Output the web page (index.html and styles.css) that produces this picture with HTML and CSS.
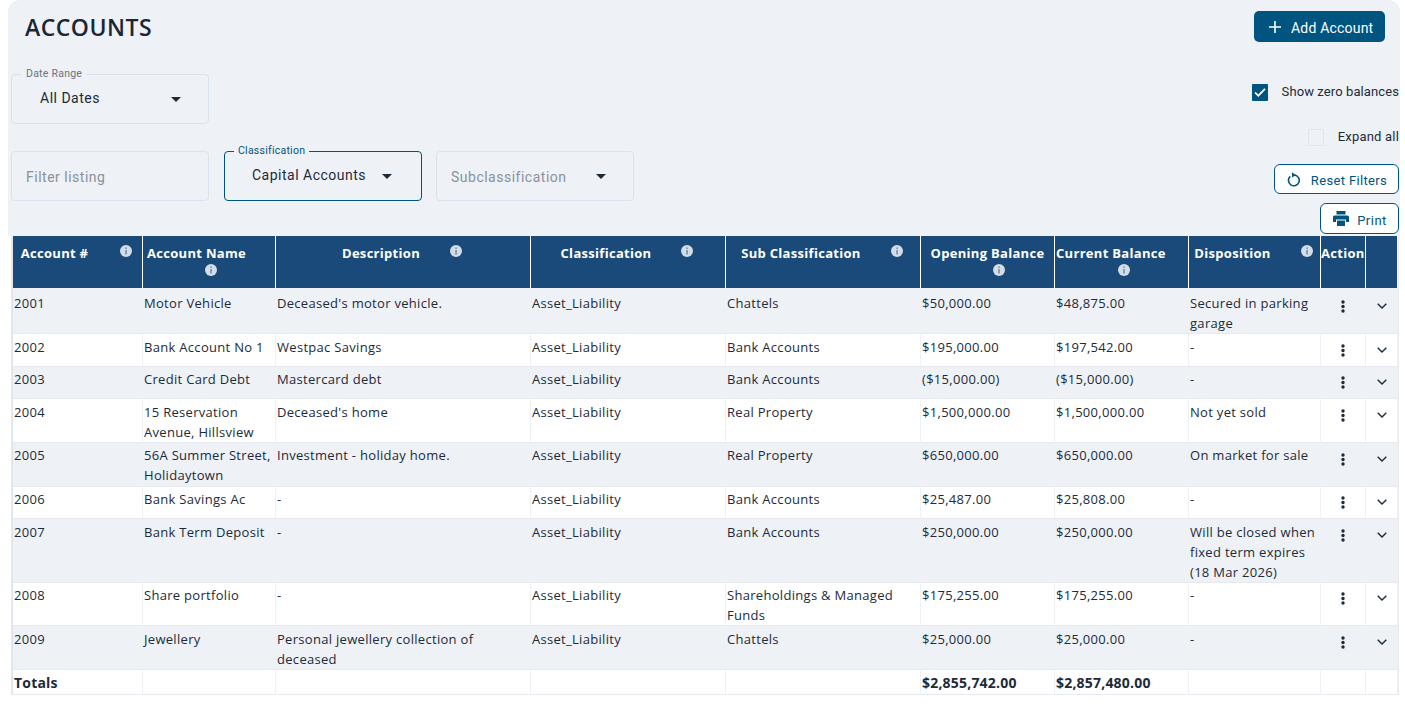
FILE: index.html
```html
<!DOCTYPE html>
<html lang="en">
<head>
<meta charset="utf-8">
<title>Accounts</title>
<link rel="stylesheet" href="styles.css">
</head>
<body>
<svg class="defs" width="0" height="0" aria-hidden="true">
  <symbol id="info" viewBox="0 0 12 12"><circle cx="6" cy="6" r="6" fill="#d3dde7"/><rect x="5.3" y="2.400" width="1.500" height="1.500" fill="#6f8aa5"/><rect x="5.3" y="5" width="1.500" height="4.500" fill="#6f8aa5"/></symbol>
  <symbol id="dots" viewBox="0 0 4 13"><circle cx="2" cy="2" r="1.700"/><circle cx="2" cy="6.500" r="1.700"/><circle cx="2" cy="11" r="1.700"/></symbol>
  <symbol id="chev" viewBox="0 0 10 6"><path d="M.7.7 5 5 9.3.7" fill="none" stroke="currentColor" stroke-width="1.400"/></symbol>
  <symbol id="caret" viewBox="0 0 10 5"><path d="M0 0h10L5 5z"/></symbol>
</svg>
<main class="panel">
  <header class="head">
    <h1 class="title">ACCOUNTS</h1>
    <button class="btn-primary"><svg class="ic-plus" viewBox="0 0 12 12"><path d="M6 0v12M0 6h12" stroke="#fff" stroke-width="1.600"/></svg>Add Account</button>
  </header>
  <section class="filters">
    <div class="filters-left">
      <div class="filter-row">
        <div class="field"><span class="field-label">Date Range</span><span class="field-value">All Dates</span><svg class="caret caret-date"><use href="#caret"/></svg></div>
      </div>
      <div class="filter-row">
        <div class="field"><span class="placeholder">Filter listing</span></div>
        <div class="field field-active"><span class="field-label label-active">Classification</span><span class="field-value">Capital Accounts</span><svg class="caret caret-class"><use href="#caret"/></svg></div>
        <div class="field"><span class="placeholder">Subclassification</span><svg class="caret caret-sub"><use href="#caret"/></svg></div>
      </div>
    </div>
    <div class="filters-right">
      <label class="check check-zero"><span class="box box-on"><svg viewBox="0 0 16 16"><path d="M3 8.500l3.300 3.200L13 4.800" fill="none" stroke="#fff" stroke-width="1.700"/></svg></span>Show zero balances</label>
      <label class="check check-expand"><span class="box"></span>Expand all</label>
      <button class="btn-outline btn-reset"><svg class="ic-reset" viewBox="0 0 14 15"><path d="M7.500 3A5.400 5.400 0 1 1 3.300 4.300" fill="none" stroke="#005580" stroke-width="1.600"/><path d="M5 .6 9 3 5 5.400z" fill="#005580"/></svg>Reset Filters</button>
      <button class="btn-outline btn-print"><svg class="ic-print" viewBox="0 0 16 15"><path d="M3.500 0h9v3.500h-9zM1.500 4.500h13a1.500 1.500 0 0 1 1.500 1.500v5h-3V8.500H3V11H0V6a1.500 1.500 0 0 1 1.500-1.500zM4 9.500h8V15H4z" fill="#005580"/></svg>Print</button>
    </div>
  </section>
  <div class="table-wrap">
    <div class="table-box">
    <table class="accounts">
      <colgroup>
        <col class="c1"><col class="c2"><col class="c3"><col class="c4"><col class="c5"><col class="c6"><col class="c7"><col class="c8"><col class="c9"><col class="c10">
      </colgroup>
      <thead>
        <tr>
          <th><span class="th-in">Account #<svg class="info"><use href="#info"/></svg></span></th>
          <th class="th-name"><span class="th-label">Account Name</span><svg class="info info-block"><use href="#info"/></svg></th>
          <th><span class="th-in">Description<svg class="info"><use href="#info"/></svg></span></th>
          <th><span class="th-in">Classification<svg class="info"><use href="#info"/></svg></span></th>
          <th><span class="th-in">Sub Classification<svg class="info"><use href="#info"/></svg></span></th>
          <th class="th-open"><span class="th-label">Opening Balance</span><svg class="info info-block"><use href="#info"/></svg></th>
          <th class="th-cur"><span class="th-label">Current Balance</span><svg class="info info-block"><use href="#info"/></svg></th>
          <th><span class="th-in">Disposition<svg class="info"><use href="#info"/></svg></span></th>
          <th class="th-action">Action</th>
          <th></th>
        </tr>
      </thead>
      <tbody>
        <tr class="alt"><td>2001</td><td>Motor Vehicle</td><td>Deceased's motor vehicle.</td><td>Asset_Liability</td><td>Chattels</td><td>$50,000.00</td><td>$48,875.00</td><td>Secured in parking garage</td><td class="act"><svg class="dots"><use href="#dots"/></svg></td><td class="act"><svg class="chev"><use href="#chev"/></svg></td></tr>
        <tr><td>2002</td><td>Bank Account No 1</td><td>Westpac Savings</td><td>Asset_Liability</td><td>Bank Accounts</td><td>$195,000.00</td><td>$197,542.00</td><td>-</td><td class="act"><svg class="dots"><use href="#dots"/></svg></td><td class="act"><svg class="chev"><use href="#chev"/></svg></td></tr>
        <tr class="alt"><td>2003</td><td>Credit Card Debt</td><td>Mastercard debt</td><td>Asset_Liability</td><td>Bank Accounts</td><td>($15,000.00)</td><td>($15,000.00)</td><td>-</td><td class="act"><svg class="dots"><use href="#dots"/></svg></td><td class="act"><svg class="chev"><use href="#chev"/></svg></td></tr>
        <tr><td>2004</td><td>15 Reservation Avenue, Hillsview</td><td>Deceased's home</td><td>Asset_Liability</td><td>Real Property</td><td>$1,500,000.00</td><td>$1,500,000.00</td><td>Not yet sold</td><td class="act"><svg class="dots"><use href="#dots"/></svg></td><td class="act"><svg class="chev"><use href="#chev"/></svg></td></tr>
        <tr class="alt"><td>2005</td><td>56A Summer Street, Holidaytown</td><td>Investment - holiday home.</td><td>Asset_Liability</td><td>Real Property</td><td>$650,000.00</td><td>$650,000.00</td><td>On market for sale</td><td class="act"><svg class="dots"><use href="#dots"/></svg></td><td class="act"><svg class="chev"><use href="#chev"/></svg></td></tr>
        <tr><td>2006</td><td>Bank Savings Ac</td><td>-</td><td>Asset_Liability</td><td>Bank Accounts</td><td>$25,487.00</td><td>$25,808.00</td><td>-</td><td class="act"><svg class="dots"><use href="#dots"/></svg></td><td class="act"><svg class="chev"><use href="#chev"/></svg></td></tr>
        <tr class="alt"><td>2007</td><td>Bank Term Deposit</td><td>-</td><td>Asset_Liability</td><td>Bank Accounts</td><td>$250,000.00</td><td>$250,000.00</td><td>Will be closed when fixed term expires (18 Mar 2026)</td><td class="act"><svg class="dots"><use href="#dots"/></svg></td><td class="act"><svg class="chev"><use href="#chev"/></svg></td></tr>
        <tr><td>2008</td><td>Share portfolio</td><td>-</td><td>Asset_Liability</td><td>Shareholdings &amp; Managed Funds</td><td>$175,255.00</td><td>$175,255.00</td><td>-</td><td class="act"><svg class="dots"><use href="#dots"/></svg></td><td class="act"><svg class="chev"><use href="#chev"/></svg></td></tr>
        <tr class="alt"><td>2009</td><td>Jewellery</td><td>Personal jewellery collection of deceased</td><td>Asset_Liability</td><td>Chattels</td><td>$25,000.00</td><td>$25,000.00</td><td>-</td><td class="act"><svg class="dots"><use href="#dots"/></svg></td><td class="act"><svg class="chev"><use href="#chev"/></svg></td></tr>
        <tr class="totals"><td>Totals</td><td></td><td></td><td></td><td></td><td>$2,855,742.00</td><td>$2,857,480.00</td><td></td><td></td><td></td></tr>
      </tbody>
    </table>
    </div>
  </div>
</main>
</body>
</html>
```
FILE: styles.css
```css
* { box-sizing: border-box; }
html, body { margin: 0; padding: 0; background: #fff; }
body { color: #1c2b3a; font-family: "Open Sans", sans-serif; }
.defs { display: block; height: 0; }

.panel { margin-left: 8px; width: 1392px; background: #eef1f6; border-radius: 12px 12px 0 0; }

.head { display: flex; justify-content: space-between; align-items: flex-start; padding: 11px 15px 0 17px; height: 42px; }
.title { margin: 1px 0 0; font-size: 23px; line-height: 30px; font-weight: 600; letter-spacing: .5px; color: #1b2733; }
.btn-primary { display: flex; align-items: center; height: 31px; width: 131px; padding: 2px 0 0 15px; border: 0; border-radius: 5px; background: #005580; color: #fff; font: 400 14px/20px Roboto, sans-serif; letter-spacing: .2px; }
.ic-plus { width: 12px; height: 12px; margin: -2px 10px 0 0; }

.filters { display: flex; justify-content: space-between; margin-top: 32px; height: 160px; }
.filters-left { padding-left: 3px; display: flex; flex-direction: column; gap: 27px; }
.filter-row { display: flex; gap: 14px; }
.filter-row .field-active { margin-left: 1px; }
.field { position: relative; display: flex; align-items: center; width: 198px; height: 50px; border: 1px solid #d9e3f0; border-radius: 4px; font: 400 14px/20px Roboto, sans-serif; letter-spacing: .5px; }
.field-active { border-color: #005580; }
.field-label { position: absolute; top: -8px; left: 10px; padding: 0 4px; background: #eef1f6; font-size: 10.500px; line-height: 13px; letter-spacing: .25px; color: #6b7480; }
.label-active { left: 9px; color: #005580; }
.field-value { margin: -3px 0 0 28px; color: #1c2b3a; }
.field-active .field-value { margin-left: 27px; }
.placeholder { margin: 2px 0 0 14px; color: #8a929c; }
.caret { width: 10px; height: 5px; fill: #1c2b3a; margin-top: 1px; }
.caret-date { margin-left: 71px; }
.caret-class { margin-left: 16px; margin-top: 0; }
.caret-sub { margin-left: 29px; }

.filters-right { display: flex; flex-direction: column; align-items: flex-end; padding-right: 1px; font: 400 13px/18px Roboto, sans-serif; color: #1c2b3a; }
.check { display: flex; align-items: center; height: 18px; letter-spacing: .1px; }
.check-zero { margin-top: 9px; }
.check-expand { margin-top: 27px; letter-spacing: .2px; }
.box { width: 16px; height: 17px; margin-right: 14px; border: 1px solid #e2e6ec; border-radius: 1px; }
.box svg { display: block; width: 16px; height: 16px; }
.box-on { background: #005580; border: 0; }
.btn-outline { display: flex; align-items: center; justify-content: center; border: 1px solid #005580; border-radius: 6px; background: #fff; color: #005580; font: 400 13px/18px Roboto, sans-serif; letter-spacing: .35px; }
.btn-reset { width: 125px; height: 30px; margin-top: 18px; padding: 4px 0 0 1px; }
.btn-print { width: 79px; height: 31px; margin-top: 9px; padding: 4px 0 0 1px; letter-spacing: .5px; }
.ic-reset { width: 14px; height: 15px; margin: -4px 10px 0 0; }
.ic-print { width: 16px; height: 15px; margin: -4px 8px 0 0; }

.table-wrap { margin-top: 2px; padding-left: 4px; background: #fff; }
.table-box { width: 1386px; border-left: 1px solid #dfe3ea; border-right: 1px solid #e6e9ef; box-shadow: 0 1px 1px rgba(0,0,0,.5); background: #fff; }
.accounts { table-layout: fixed; border-collapse: separate; border-spacing: 0; width: 1285px; font-size: 13px; line-height: 20px; letter-spacing: .3px; }
.c1 { width: 130px; } .c2 { width: 133px; } .c3 { width: 255px; } .c4, .c5 { width: 195px; } .c6, .c7 { width: 134px; } .c8 { width: 132px; } .c9 { width: 45px; } .c10 { width: 32px; }

.accounts th { height: 52px; padding: 7px 3px 0 1px; vertical-align: top; background: #1a4a7a; color: #fff; border-right: 1px solid #fff; font-size: 13px; font-weight: 700; line-height: 20px; text-align: center; white-space: nowrap; letter-spacing: .3px; }
.accounts thead th { box-shadow: 0 2px 0 #e6e9ef; }
.th-in { display: inline-block; }
.info { display: inline-block; width: 12px; height: 12px; }
.th-in .info { margin: 0 0 7px 30px; vertical-align: middle; }
.accounts th:first-child .info { margin-left: 32px; }
.th-label { display: block; }
.info-block { display: block; margin-top: 1px; }
.accounts .th-name, .accounts .th-open, .accounts .th-cur { padding: 7px 1px 0; }
.th-name .th-label { text-align: left; padding-left: 3px; }
.th-name .info-block { margin-left: 61px; }
.th-open .info-block { margin-left: 71px; }
.th-cur .th-label { text-align: left; }
.th-cur .info-block { margin-left: 62px; }
.accounts .th-action { text-align: left; padding-left: 0; padding-right: 0; }

.accounts td { height: 32.600px; padding: 2.350px 1px 0.250px; vertical-align: top; border-right: 1px solid #eef1f6; border-bottom: 1px solid #e6e9ef; background: #fff; }
.accounts tr.alt td { background: #eef1f6; }
.accounts tbody tr:first-child td { padding-top: 5px; height: 46px; }
.accounts td.act { padding: 9.500px 0 0; }
.accounts tbody tr:first-child td.act { padding-top: 12px; }
.dots { display: block; width: 4px; height: 13px; margin: 0 auto; fill: #1c2b3a; }
.chev { display: block; width: 10px; height: 6px; margin: 3px auto 0; color: #1c2b3a; }
.accounts .totals td { height: 25.400px; padding-top: 3px; font-size: 14px; font-weight: 700; letter-spacing: .2px; }
```
